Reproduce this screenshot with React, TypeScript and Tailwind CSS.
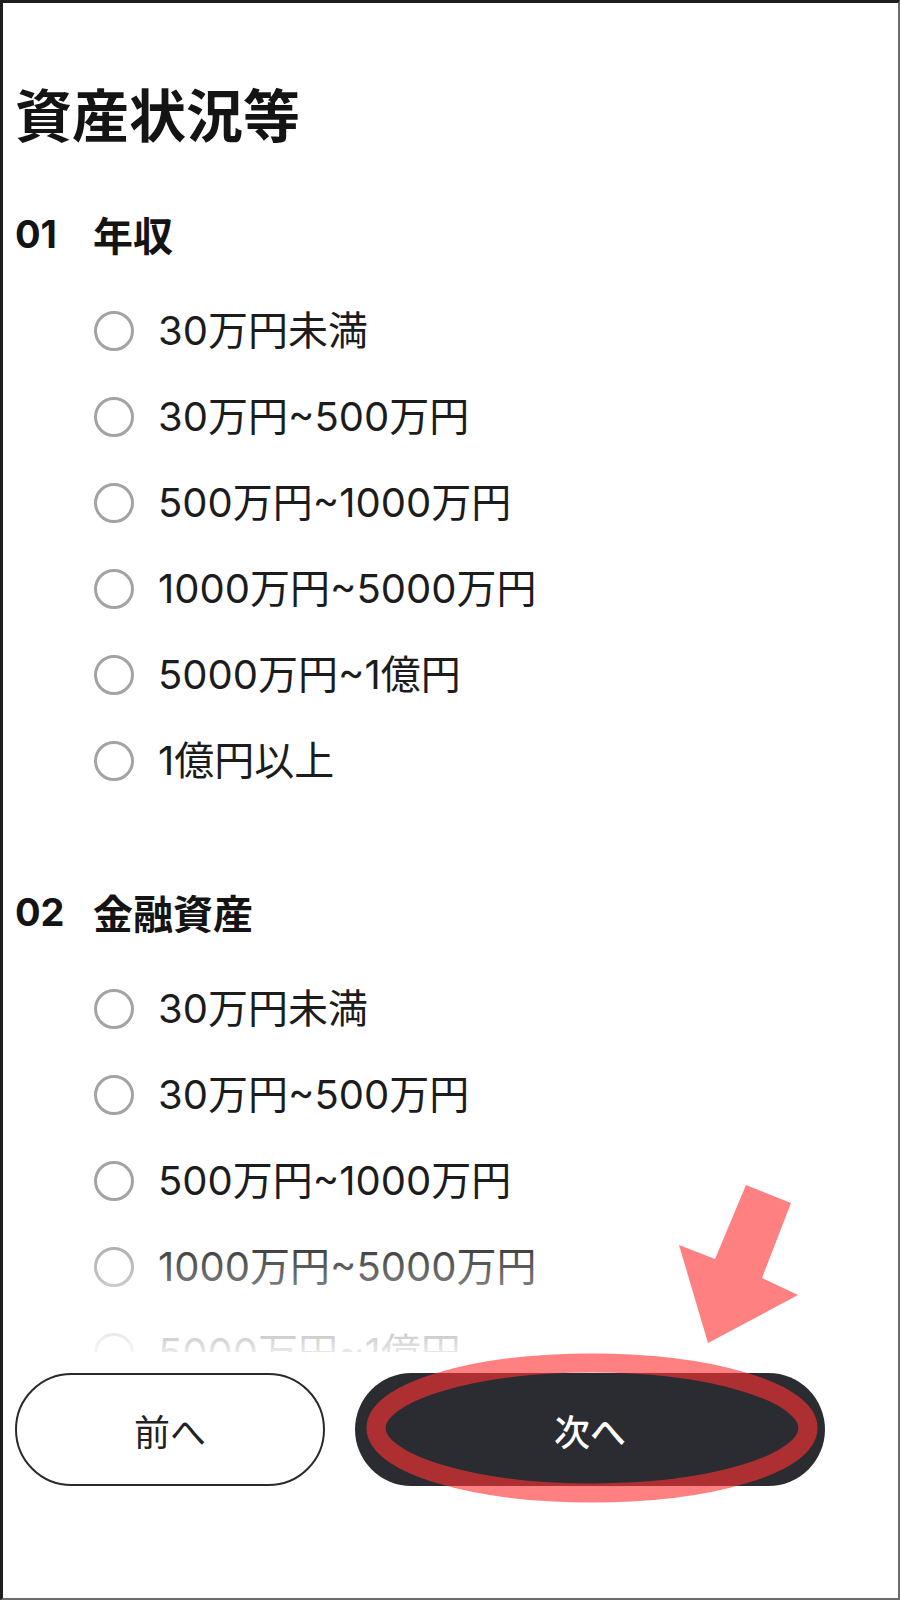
import React from 'react';

const incomeOptions = [
  '30万円未満',
  '30万円~500万円',
  '500万円~1000万円',
  '1000万円~5000万円',
  '5000万円~1億円',
  '1億円以上',
];

const assetOptions = [
  '30万円未満',
  '30万円~500万円',
  '500万円~1000万円',
  '1000万円~5000万円',
  '5000万円~1億円',
  '1億円以上',
];

interface SectionProps {
  num: string;
  title: string;
  options: string[];
  className?: string;
}

const RadioRow: React.FC<{ label: string }> = ({ label }) => (
  <label className="flex items-center h-[86px] pl-[79px]">
    <span className="w-10 h-10 rounded-full border-[3px] border-[#a3a3a3] shrink-0" />
    <span className="ml-[24px] text-[40px] leading-none text-[#1c1c1c] font-[family-name:Inter,'Noto_Sans_CJK_JP',sans-serif]">
      {label}
    </span>
  </label>
);

const Section: React.FC<SectionProps> = ({ num, title, options, className }) => (
  <section className={className}>
    <div className="flex items-center h-[86px]">
      <span className="w-[78px] text-[38px] font-bold leading-none text-[#141414] font-[family-name:Inter,sans-serif]">
        {num}
      </span>
      <span className="text-[40px] font-bold leading-none text-[#141414]">{title}</span>
    </div>
    <div className="mt-[11px] flex flex-col">
      {options.map((o) => (
        <RadioRow key={o} label={o} />
      ))}
    </div>
  </section>
);

const App: React.FC = () => {
  return (
    <div className="relative w-[900px] h-[1600px] flex flex-col bg-white border-l-[3px] border-t-[3px] border-r-2 border-b-2 border-l-[#1e1e1e] border-t-[#1e1e1e] border-r-[#6b6b6b] border-b-[#6b6b6b] overflow-hidden font-[family-name:'Noto_Sans_CJK_JP',sans-serif]">
      <main className="relative flex-1 overflow-hidden pl-3">
        <h1 className="mt-[81px] h-[57px] text-[57px] font-bold leading-none text-[#141414]">資産状況等</h1>
        <Section num="01" title="年収" options={incomeOptions} className="mt-[50px]" />
        <Section num="02" title="金融資産" options={assetOptions} className="mt-[65px]" />
        <div className="absolute left-0 right-0 bottom-0 h-[125px] bg-linear-to-b from-white/0 to-white/90" />
      </main>
      <footer className="h-[246px] shrink-0 bg-white flex gap-[30px] pl-3 pt-[21px] items-start">
        <button className="w-[310px] h-[113px] rounded-full border-2 border-[#2a2a2a] bg-white text-[36px] leading-none text-[#222]">
          前へ
        </button>
        <button className="w-[470px] h-[113px] rounded-full bg-[#2a2c31] text-[36px] font-medium leading-none text-white">
          次へ
        </button>
      </footer>
      <svg
        className="absolute left-[-3px] top-[-3px] pointer-events-none"
        width="900"
        height="1600"
        viewBox="0 0 900 1600"
      >
        <ellipse cx="592" cy="1428" rx="216" ry="65" fill="none" stroke="rgba(255,50,50,0.62)" strokeWidth="19" />
        <polygon
          points="746,1185 791,1203 762,1278 798,1295 708,1343 679,1245 715,1259"
          fill="rgba(255,50,50,0.62)"
        />
      </svg>
    </div>
  );
};

export default App;
